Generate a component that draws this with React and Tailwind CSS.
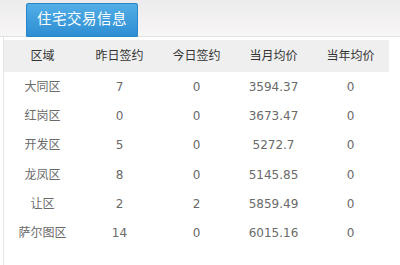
export default function App() {
  const rows = [
    ['大同区', '7', '0', '3594.37', '0'],
    ['红岗区', '0', '0', '3673.47', '0'],
    ['开发区', '5', '0', '5272.7', '0'],
    ['龙凤区', '8', '0', '5145.85', '0'],
    ['让区', '2', '2', '5859.49', '0'],
    ['萨尔图区', '14', '0', '6015.16', '0'],
  ];
  const heads = ['区域', '昨日签约', '今日签约', '当月均价', '当年均价'];

  return (
    <div
      className="w-[400px] h-[265px] bg-white overflow-hidden"
      style={{ fontFamily: '"DejaVu Sans", "Noto Sans CJK SC", sans-serif' }}
    >
      {/* tab bar */}
      <div className="h-[37px] bg-gradient-to-b from-[#ececec] to-[#f8f5f5] border-b border-[#e2e2e2] pl-[26px] pt-[3px] flex">
        <div className="w-[112px] h-[34px] rounded-t-[2px] bg-gradient-to-b from-[#52aee6] to-[#2d8ed3] border border-[#2a86c8] flex items-center justify-center text-white text-[14.5px] tracking-[0.5px]">
          住宅交易信息
        </div>
      </div>

      <div className="ml-[3px] border-l border-[#e6e6e6] h-[228px] pt-[3px]">
        <div className="w-[385px] h-[32px] bg-[#efefef] grid grid-cols-5 items-center text-[12px] text-[#333]">
          {heads.map((h) => (
            <div key={h} className="text-center">{h}</div>
          ))}
        </div>
        {rows.map((r) => (
          <div key={r[0]} className="w-[385px] h-[29.3px] grid grid-cols-5 items-center text-[12px] text-[#6a6a6a]">
            {r.map((c, i) => (
              <div key={i} className="text-center">{c}</div>
            ))}
          </div>
        ))}
      </div>
    </div>
  );
}
